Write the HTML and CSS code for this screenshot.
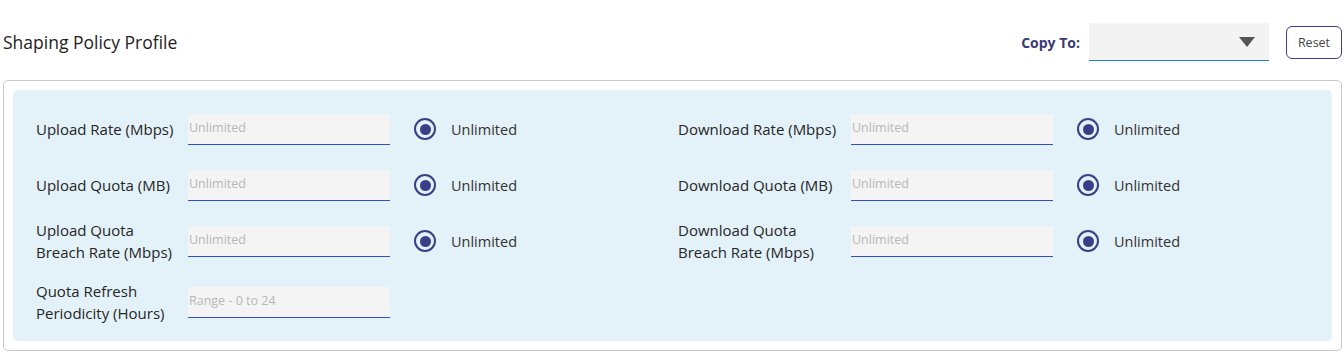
FILE: index.html
```html
<!DOCTYPE html>
<html lang="en">
<head>
  <meta charset="UTF-8" />
  <title>Shaping Policy Profile</title>
  <link rel="stylesheet" href="styles.css">
</head>
<body>
<div class="header">
  <h1 class="title">Shaping Policy Profile</h1>
  <div class="actions">
    <label class="copy-label">Copy To:</label>
    <div class="copy-select">
      <svg class="caret" width="16" height="10" viewBox="0 0 16 10"><path d="M0 0 L16 0 L8 10 Z" fill="#555"/></svg>
    </div>
    <button class="reset-btn">Reset</button>
  </div>
</div>

<div class="box">
  <div class="panel">
    <div class="field">
      <label class="field-label">Upload Rate (Mbps)</label>
      <input class="field-input" placeholder="Unlimited" />
      <span class="radio"></span><span class="radio-text">Unlimited</span>
    </div>
    <div class="field right">
      <label class="field-label">Download Rate (Mbps)</label>
      <input class="field-input" placeholder="Unlimited" />
      <span class="radio"></span><span class="radio-text">Unlimited</span>
    </div>

    <div class="field">
      <label class="field-label">Upload Quota (MB)</label>
      <input class="field-input" placeholder="Unlimited" />
      <span class="radio"></span><span class="radio-text">Unlimited</span>
    </div>
    <div class="field right">
      <label class="field-label">Download Quota (MB)</label>
      <input class="field-input" placeholder="Unlimited" />
      <span class="radio"></span><span class="radio-text">Unlimited</span>
    </div>

    <div class="field">
      <label class="field-label">Upload Quota<br>Breach Rate (Mbps)</label>
      <input class="field-input" placeholder="Unlimited" />
      <span class="radio"></span><span class="radio-text">Unlimited</span>
    </div>
    <div class="field right">
      <label class="field-label">Download Quota<br>Breach Rate (Mbps)</label>
      <input class="field-input" placeholder="Unlimited" />
      <span class="radio"></span><span class="radio-text">Unlimited</span>
    </div>

    <div class="field last">
      <label class="field-label">Quota Refresh<br>Periodicity (Hours)</label>
      <input class="field-input" placeholder="Range - 0 to 24" />
    </div>
  </div>
</div>
</body>
</html>
```

FILE: styles.css
```css
body {
  margin: 0;
  font-family: 'Open Sans', 'Lato', sans-serif;
  color: #333;
  background: #fff;
}

.header {
  display: flex;
  justify-content: space-between;
  align-items: center;
  height: 80px;
  padding: 0 1px 0 3px;
}
.title {
  margin: 3px 0 0;
  font-size: 17.5px;
  font-weight: 400;
  color: #222;
}
.actions {
  display: flex;
  align-items: center;
  margin-top: 4px;
}
.copy-label {
  font-size: 14px;
  font-weight: 700;
  color: #3a3a75;
  margin-right: 9px;
}
.copy-select {
  width: 180px;
  height: 37px;
  background: #f3f3f3;
  border-bottom: 1px solid #1c86a8;
  display: flex;
  align-items: center;
  justify-content: flex-end;
}
.caret {
  margin-right: 14px;
}
.reset-btn {
  margin-left: 17px;
  width: 56px;
  height: 33px;
  border: 1px solid #3b3f87;
  border-radius: 6px;
  background: #fff;
  font-family: 'Open Sans', sans-serif;
  font-size: 12.5px;
  color: #444;
  padding: 0;
}

.box {
  margin: 0 1px 1px 3px;
  border: 1px solid #c8c8c8;
  border-radius: 5px;
  padding: 9px;
}
.panel {
  background: #e3f1f8;
  border-radius: 5px;
  padding: 17px 0 17px 23px;
  display: grid;
  grid-template-columns: 642px 1fr;
  grid-auto-rows: minmax(44px, auto);
  row-gap: 12px;
}
.field {
  display: flex;
  align-items: center;
}
.field.last {
  margin-top: 5px;
}
.field-label {
  width: 152px;
  flex-shrink: 0;
  font-size: 15px;
  line-height: 22px;
  color: #262626;
}
.field.right .field-label {
  width: 173px;
}
.field-input {
  width: 202px;
  height: 31px;
  box-sizing: border-box;
  border: none;
  border-bottom: 1px solid #2f4fd0;
  background: #f4f4f4;
  padding: 0 0 2px 1px;
  font-family: 'Open Sans', sans-serif;
  font-size: 12.5px;
}
.field-input::placeholder {
  color: #b8b8b8;
}
.radio {
  width: 18px;
  height: 18px;
  border: 2.5px solid #3b3f87;
  border-radius: 50%;
  margin-left: 24px;
  display: flex;
  align-items: center;
  justify-content: center;
}
.radio::after {
  content: '';
  width: 11px;
  height: 11px;
  border-radius: 50%;
  background: #3b3f87;
}
.radio-text {
  margin-left: 15px;
  font-size: 14.5px;
  color: #333;
}
```
